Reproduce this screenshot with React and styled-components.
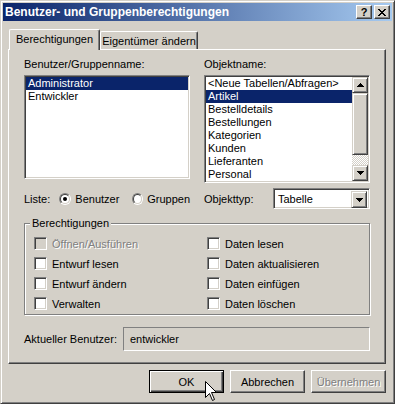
import React from "react";
import styled, { createGlobalStyle } from "styled-components";

const GlobalStyle = createGlobalStyle`
  html, body {
    margin: 0;
    padding: 0;
    background: #d4d0c8;
  }
  body {
    font-family: "Liberation Sans", Arial, sans-serif;
    font-size: 11px;
    color: #000;
  }
  * {
    box-sizing: border-box;
  }
`;

const Window = styled.div`
  position: relative;
  width: 395px;
  height: 404px;
  background: #d4d0c8;
  border: 1px solid;
  border-color: #d4d0c8 #404040 #404040 #d4d0c8;
  box-shadow: inset 1px 1px #fff, inset -1px -1px #808080;
  padding: 2px;
  display: flex;
  flex-direction: column;
`;

const TitleBar = styled.div`
  height: 18px;
  display: flex;
  align-items: center;
  padding-left: 2px;
  background: linear-gradient(to right, #0a246a, #a6caf0);
  color: #fff;
  font-weight: bold;
  font-size: 12px;
`;

const CaptionButtons = styled.div`
  margin-left: auto;
  margin-right: 2px;
  display: flex;
  gap: 2px;
`;

const CaptionButton = styled.div`
  width: 16px;
  height: 14px;
  display: flex;
  align-items: center;
  justify-content: center;
  background: #d4d0c8;
  color: #000;
  font-weight: bold;
  font-size: 11px;
  line-height: 12px;
  border: 1px solid;
  border-color: #fff #404040 #404040 #fff;
  box-shadow: inset -1px -1px #808080;
`;

const Body = styled.div`
  padding: 8px 6px 0 5px;
`;

const TabStrip = styled.div`
  display: flex;
  align-items: flex-end;
  padding-left: 1px;
  height: 20px;
`;

const Tab = styled.div`
  position: relative;
  z-index: ${(p) => (p.$active ? 1 : 0)};
  width: ${(p) => p.$width}px;
  height: ${(p) => (p.$active ? 21 : 18)}px;
  margin-bottom: ${(p) => (p.$active ? -1 : 0)}px;
  padding-top: 3px;
  line-height: 13px;
  text-align: center;
  background: #d4d0c8;
  border-top: 1px solid #fff;
  border-left: 1px solid #fff;
  border-right: 1px solid #404040;
  border-top-left-radius: 2px;
  border-top-right-radius: 2px;
  box-shadow: inset -1px 0 #808080;
`;

const Panel = styled.div`
  width: 378px;
  border: 1px solid;
  border-color: #fff #404040 #404040 #fff;
  box-shadow: inset -1px -1px #808080;
  padding: 8px 15px 12px;
`;

const Columns = styled.div`
  display: grid;
  grid-template-columns: 166px 166px;
  column-gap: 14px;
`;

const Column = styled.div`
  display: flex;
  flex-direction: column;
`;

const Label = styled.div`
  line-height: 13px;
  height: 13px;
  margin-bottom: 4px;
  white-space: nowrap;
`;

const Sunken = styled.div`
  border: 1px solid;
  border-color: #808080 #fff #fff #808080;
  box-shadow: inset 1px 1px #404040, inset -1px -1px #d4d0c8;
`;

const ListBox = styled(Sunken)`
  height: ${(p) => p.$height}px;
  background: #fff;
  padding: 1px;
  display: flex;
`;

const List = styled.div`
  flex: 1;
  display: flex;
  flex-direction: column;
`;

const Item = styled.div`
  height: 13px;
  line-height: 13px;
  padding-left: 2px;
  white-space: nowrap;
  background: ${(p) => (p.$selected ? "#0a246a" : "transparent")};
  color: ${(p) => (p.$selected ? "#fff" : "#000")};
`;

const Raised = styled.div`
  background: #d4d0c8;
  border: 1px solid;
  border-color: #d4d0c8 #404040 #404040 #d4d0c8;
  box-shadow: inset 1px 1px #fff, inset -1px -1px #808080;
`;

const ScrollBar = styled.div`
  width: 16px;
  display: flex;
  flex-direction: column;
`;

const ArrowButton = styled(Raised)`
  width: 16px;
  height: ${(p) => p.$height || 16}px;
  display: flex;
  align-items: center;
  justify-content: center;
`;

const Thumb = styled(Raised)`
  height: 62px;
`;

const Track = styled.div`
  flex: 1;
  background: repeating-conic-gradient(#fff 0 25%, #d4d0c8 0 50%) 0 0 / 2px 2px;
`;

const OptionRow = styled.div`
  height: 21px;
  margin-top: ${(p) => p.$gap}px;
  display: flex;
  align-items: center;
`;

const FixedLabel = styled.span`
  width: ${(p) => p.$width}px;
  white-space: nowrap;
`;

const RadioOption = styled.label`
  display: flex;
  align-items: center;
  gap: 4px;
  min-width: ${(p) => p.$width || 0}px;
`;

const RadioOuter = styled.span`
  width: 12px;
  height: 12px;
  border-radius: 50%;
  border: 1px solid;
  border-color: #808080 #fff #fff #808080;
  display: flex;
`;

const RadioInner = styled.span`
  flex: 1;
  border-radius: 50%;
  border: 1px solid;
  border-color: #404040 #d4d0c8 #d4d0c8 #404040;
  background: #fff;
  display: flex;
  align-items: center;
  justify-content: center;

  &::after {
    content: "";
    width: 4px;
    height: 4px;
    border-radius: 50%;
    background: ${(p) => (p.$checked ? "#000" : "transparent")};
  }
`;

const Combo = styled(Sunken)`
  width: 97px;
  height: 21px;
  background: #fff;
  padding: 2px;
  display: flex;
`;

const ComboText = styled.div`
  flex: 1;
  line-height: 17px;
  padding-left: 2px;
`;

const Group = styled.fieldset`
  margin: 8px 0 0;
  padding: 4px 0 1px 5px;
  border: 1px solid #808080;
  box-shadow: inset 1px 1px #fff, 1px 1px #fff;
  min-width: 0;
`;

const Legend = styled.legend`
  padding: 0 2px;
  line-height: 13px;
  background: #d4d0c8;
`;

const CheckGrid = styled.div`
  margin-left: 4px;
  display: grid;
  grid-template-columns: 173px 1fr;
  grid-auto-rows: 19px;
  row-gap: 1px;
`;

const CheckRow = styled.div`
  display: flex;
  align-items: center;
  gap: 5px;
  white-space: nowrap;
  color: ${(p) => (p.$disabled ? "#808080" : "#000")};
  text-shadow: ${(p) => (p.$disabled ? "1px 1px #fff" : "none")};
`;

const CheckBox = styled(Sunken)`
  width: 13px;
  height: 13px;
  background: ${(p) => (p.$disabled ? "#d4d0c8" : "#fff")};
`;

const UserRow = styled.div`
  margin-top: 12px;
  display: flex;
  align-items: center;
  height: 24px;
`;

const StaticField = styled.div`
  width: 247px;
  height: 24px;
  line-height: 22px;
  padding-left: 6px;
  border: 1px solid;
  border-color: #808080 #fff #fff #808080;
`;

const ButtonRow = styled.div`
  margin-top: 6px;
  display: flex;
  justify-content: flex-end;
  gap: 6px;
`;

const PushButton = styled.div`
  width: 75px;
  height: 23px;
  display: flex;
  align-items: center;
  justify-content: center;
  background: #d4d0c8;
  border: 1px solid;
  border-color: ${(p) =>
    p.$default ? "#000" : "#fff #404040 #404040 #fff"};
  box-shadow: ${(p) =>
    p.$default
      ? "inset 1px 1px #fff, inset -1px -1px #404040, inset -2px -2px #808080"
      : "inset -1px -1px #808080"};
  color: ${(p) => (p.$disabled ? "#808080" : "#000")};
  text-shadow: ${(p) => (p.$disabled ? "1px 1px #fff" : "none")};
`;

const Cursor = styled.svg`
  position: absolute;
  left: 204px;
  top: 380px;
`;

const Arrow = ({ down }) => (
  <svg width="7" height="4" viewBox="0 0 7 4" shapeRendering="crispEdges">
    <path
      d={
        down
          ? "M0 0h7v1h-7z M1 1h5v1h-5z M2 2h3v1h-3z M3 3h1v1h-1z"
          : "M3 0h1v1h-1z M2 1h3v1h-3z M1 2h5v1h-5z M0 3h7v1h-7z"
      }
      fill="#000"
    />
  </svg>
);

const CloseGlyph = () => (
  <svg width="8" height="7" viewBox="0 0 8 7" shapeRendering="crispEdges">
    <path
      d="M0 0h2v1h-2z M6 0h2v1h-2z M1 1h2v1h-2z M5 1h2v1h-2z M2 2h4v1h-4z M3 3h2v1h-2z M2 4h4v1h-4z M1 5h2v1h-2z M5 5h2v1h-2z M0 6h2v1h-2z M6 6h2v1h-2z"
      fill="#000"
    />
  </svg>
);

const Radio = ({ checked, label, width }) => (
  <RadioOption $width={width}>
    <RadioOuter>
      <RadioInner $checked={checked} />
    </RadioOuter>
    {label}
  </RadioOption>
);

const Check = ({ label, disabled }) => (
  <CheckRow $disabled={disabled}>
    <CheckBox $disabled={disabled} />
    {label}
  </CheckRow>
);

const objekte = [
  "<Neue Tabellen/Abfragen>",
  "Artikel",
  "Bestelldetails",
  "Bestellungen",
  "Kategorien",
  "Kunden",
  "Lieferanten",
  "Personal",
];

const rechte = [
  { label: "Öffnen/Ausführen", disabled: true },
  { label: "Daten lesen" },
  { label: "Entwurf lesen" },
  { label: "Daten aktualisieren" },
  { label: "Entwurf ändern" },
  { label: "Daten einfügen" },
  { label: "Verwalten" },
  { label: "Daten löschen" },
];

export default function App() {
  return (
    <>
      <GlobalStyle />
      <Window>
        <TitleBar>
          Benutzer- und Gruppenberechtigungen
          <CaptionButtons>
            <CaptionButton>?</CaptionButton>
            <CaptionButton>
              <CloseGlyph />
            </CaptionButton>
          </CaptionButtons>
        </TitleBar>
        <Body>
          <TabStrip>
            <Tab $active $width={91}>
              Berechtigungen
            </Tab>
            <Tab $width={98}>Eigentümer ändern</Tab>
          </TabStrip>
          <Panel>
            <Columns>
              <Column>
                <Label>Benutzer/Gruppenname:</Label>
                <ListBox $height={104}>
                  <List>
                    <Item $selected>Administrator</Item>
                    <Item>Entwickler</Item>
                  </List>
                </ListBox>
                <OptionRow $gap={9}>
                  <FixedLabel $width={36}>Liste:</FixedLabel>
                  <Radio checked label="Benutzer" width={73} />
                  <Radio label="Gruppen" />
                </OptionRow>
              </Column>
              <Column>
                <Label>Objektname:</Label>
                <ListBox $height={108}>
                  <List>
                    {objekte.map((o) => (
                      <Item key={o} $selected={o === "Artikel"}>
                        {o}
                      </Item>
                    ))}
                  </List>
                  <ScrollBar>
                    <ArrowButton>
                      <Arrow />
                    </ArrowButton>
                    <Thumb />
                    <Track />
                    <ArrowButton>
                      <Arrow down />
                    </ArrowButton>
                  </ScrollBar>
                </ListBox>
                <OptionRow $gap={5}>
                  <FixedLabel $width={69}>Objekttyp:</FixedLabel>
                  <Combo>
                    <ComboText>Tabelle</ComboText>
                    <ArrowButton $height={17}>
                      <Arrow down />
                    </ArrowButton>
                  </Combo>
                </OptionRow>
              </Column>
            </Columns>

            <Group>
              <Legend>Berechtigungen</Legend>
              <CheckGrid>
                {rechte.map((r) => (
                  <Check key={r.label} label={r.label} disabled={r.disabled} />
                ))}
              </CheckGrid>
            </Group>

            <UserRow>
              <FixedLabel $width={99}>Aktueller Benutzer:</FixedLabel>
              <StaticField>entwickler</StaticField>
            </UserRow>
          </Panel>

          <ButtonRow>
            <PushButton $default>OK</PushButton>
            <PushButton>Abbrechen</PushButton>
            <PushButton $disabled>Übernehmen</PushButton>
          </ButtonRow>
        </Body>
        <Cursor width="13" height="21" viewBox="0 0 13 21">
          <path
            d="M0.5 0.5 L0.5 16.5 L4.5 12.5 L7.5 19.5 L9.5 18.5 L6.5 11.5 L11.5 11.5 Z"
            fill="#fff"
            stroke="#000"
            strokeWidth="1"
          />
        </Cursor>
      </Window>
    </>
  );
}
